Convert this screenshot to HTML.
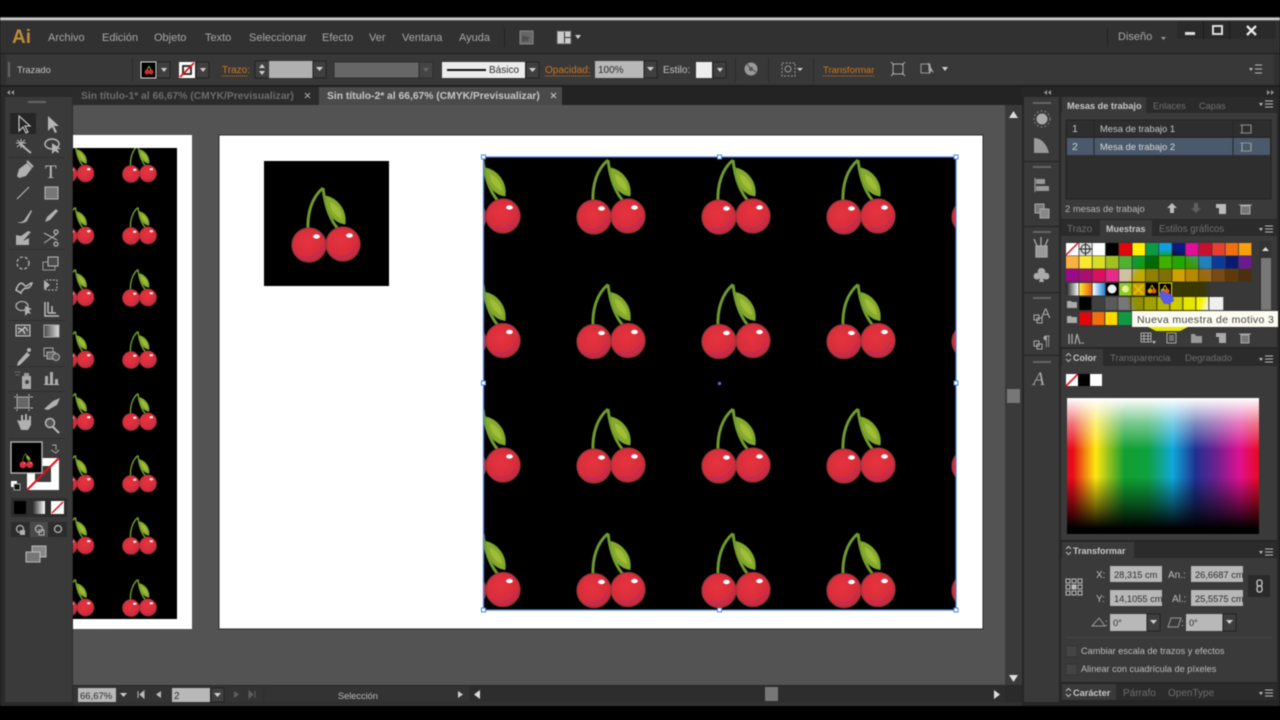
<!DOCTYPE html>
<html lang="es">
<head>
<meta charset="utf-8">
<title>Illustrator</title>
<style>
html,body{margin:0;padding:0;background:#000;width:1280px;height:720px;overflow:hidden}
svg{display:block;filter:blur(.5px)}
text{font-family:"Liberation Sans",sans-serif;font-size:10.5px;fill:#bdbdbd;white-space:pre}
.m{font-size:11px;fill:#a8a8a8}
.b{font-weight:bold}
.d{fill:#6f6f6f}
.o{fill:#d0761e}
.k{fill:#2c2c2c;font-size:9.300px}
.ic{fill:none;stroke:#b5b5b5;stroke-width:1.3}
.fi{fill:#b0b0b0}
.ar{fill:#d0d0d0}
.bx{fill:#3f3f3f;stroke:#222}
</style>
</head>
<body>
<svg width="1280" height="720" viewBox="0 0 1280 720" xmlns="http://www.w3.org/2000/svg">
<defs>
<radialGradient id="ch" cx=".45" cy=".4" r=".65"><stop offset="0" stop-color="#e6343f"/><stop offset=".75" stop-color="#d62c3a"/><stop offset="1" stop-color="#b02832"/></radialGradient>
<radialGradient id="gl" cx=".5" cy=".5" r=".5"><stop offset="0" stop-color="#ffff00"/><stop offset=".8" stop-color="#ffff00"/><stop offset="1" stop-color="#ffffff"/></radialGradient>
<linearGradient id="sp" x1="0" x2="1" y1="0" y2="0"><stop offset="0" stop-color="#d81020"/><stop offset=".03" stop-color="#e80a1a"/><stop offset=".09" stop-color="#f08010"/><stop offset=".15" stop-color="#ffe810"/><stop offset=".22" stop-color="#90c020"/><stop offset=".3" stop-color="#10a030"/><stop offset=".42" stop-color="#10a040"/><stop offset=".55" stop-color="#10a8d8"/><stop offset=".67" stop-color="#203090"/><stop offset=".78" stop-color="#702090"/><stop offset=".9" stop-color="#e01090"/><stop offset="1" stop-color="#e80a20"/></linearGradient>
<linearGradient id="spv" x1="0" x2="0" y1="0" y2="1"><stop offset="0" stop-color="#fff"/><stop offset=".18" stop-color="#fff" stop-opacity=".45"/><stop offset=".38" stop-color="#fff" stop-opacity="0"/><stop offset=".58" stop-color="#000" stop-opacity="0"/><stop offset=".8" stop-color="#000" stop-opacity=".55"/><stop offset=".96" stop-color="#000"/></linearGradient>
<linearGradient id="gr" x1="0" x2="1" y1="0" y2="0"><stop offset="0" stop-color="#444"/><stop offset="1" stop-color="#ddd"/></linearGradient>
<linearGradient id="bw" x1="0" x2="1" y1="0" y2="0"><stop offset="0" stop-color="#222"/><stop offset="1" stop-color="#fff"/></linearGradient>
<linearGradient id="yo" x1="0" x2="1" y1="0" y2="0"><stop offset="0" stop-color="#ffee30"/><stop offset="1" stop-color="#e85a10"/></linearGradient>
<linearGradient id="bl" x1="0" x2="1" y1="0" y2="0"><stop offset="0" stop-color="#fff"/><stop offset="1" stop-color="#2080d8"/></linearGradient>
<clipPath id="c1"><rect x="73" y="148" width="104" height="471"/></clipPath>
<clipPath id="c2"><rect x="484" y="157" width="472" height="453"/></clipPath>
<g id="c">
<path d="M59 27C48 36 43 52 44 70" fill="none" stroke="#6f9a2e" stroke-width="3"/>
<path d="M59 27C61 45 66 60 76 70" fill="none" stroke="#6f9a2e" stroke-width="3"/>
<path d="M62 35C72 37 83 48 81 63C72 62 60 52 62 35Z" fill="#86a92c" stroke="#6f9a2e"/>
<path d="M66 41C73 44 78 50 78 58C72 55 66 50 66 41Z" fill="#a0bd38"/>
<circle cx="79" cy="83" r="17" fill="url(#ch)" stroke="#93363c" stroke-width="1.300"/>
<circle cx="45" cy="84" r="17" fill="url(#ch)" stroke="#93363c" stroke-width="1.300"/>
<path d="M36 95C44 99 54 96 58 86" fill="none" stroke="#b82a6a" stroke-width="1.3"/>
<path d="M70 94C78 98 88 95 92 85" fill="none" stroke="#b82a6a" stroke-width="1.3"/>
<ellipse cx="52.5" cy="75.5" rx="3.400" ry="2.200" fill="#fff"/>
<ellipse cx="85.5" cy="74.5" rx="3.400" ry="2.200" fill="#fff"/>
</g>
</defs>

<rect width="1280" height="720" fill="#000"/>
<rect y="17" width="1280" height="1" fill="#777"/>
<rect y="18" width="1280" height="2" fill="#d4d4d4"/>
<rect y="20" width="1280" height="686" fill="#303030"/>
<rect y="20" width="1280" height="1" fill="#555"/>

<!-- title bar -->
<rect y="21" width="1280" height="32" fill="#313131"/>
<rect y="53" width="1280" height="1" fill="#1e1e1e"/>
<text x="12" y="43" style="font-size:19px;font-weight:bold;fill:#c08a3a">Ai</text>
<text class="m" x="48" y="41">Archivo</text>
<text class="m" x="102" y="41">Edición</text>
<text class="m" x="154" y="41">Objeto</text>
<text class="m" x="205" y="41">Texto</text>
<text class="m" x="249" y="41">Seleccionar</text>
<text class="m" x="322" y="41">Efecto</text>
<text class="m" x="369" y="41">Ver</text>
<text class="m" x="402" y="41">Ventana</text>
<text class="m" x="459" y="41">Ayuda</text>
<rect x="504" y="28" width="1" height="19" fill="#222"/>
<rect x="520" y="31" width="13" height="13" fill="#666" stroke="#888"/>
<text x="522" y="41" style="font-size:7px;fill:#2c2c2c">Br</text>
<rect x="557" y="31" width="14" height="13" fill="#ccc" stroke="#555"/>
<rect x="564" y="32" width="1" height="11" fill="#333"/><rect x="565" y="37" width="6" height="1" fill="#333"/>
<path d="M575 35h6l-3 4z" class="ar"/>
<rect x="1107" y="28" width="1" height="19" fill="#222"/>
<text class="m" x="1118" y="40" style="font-size:11px">Diseño</text>
<path d="M1161 37h5l-2.500 3z" fill="#999"/>
<rect x="1177" y="21" width="99" height="18" rx="2" fill="#2a2a2a"/>
<rect x="1203" y="21" width="1" height="18" fill="#1a1a1a"/><rect x="1229" y="21" width="1" height="18" fill="#1a1a1a"/>
<rect x="1185" y="32" width="10" height="3" fill="#ddd"/>
<rect x="1213" y="26" width="9" height="8" fill="none" stroke="#ddd" stroke-width="2"/>
<path d="M1247 26l9 9M1256 26l-9 9" stroke="#e8e8e8" stroke-width="2.300"/>

<!-- control bar -->
<rect x="6" y="54" width="1268" height="31" fill="#383838"/>
<rect y="85" width="1280" height="2" fill="#1f1f1f"/>
<rect x="8" y="62" width="2" height="15" fill="#666"/>
<text x="17" y="73" style="font-size:9.300px;fill:#c4c4c4">Trazado</text>
<rect x="132" y="58" width="1" height="24" fill="#2b2b2b"/>
<rect x="141" y="62" width="15" height="16" fill="#000" stroke="#ddd"/>
<circle cx="147" cy="72" r="2.500" fill="#d02a38"/><circle cx="151" cy="72" r="2.500" fill="#d02a38"/><path d="M149 66l-2 4M149 66l2 4" stroke="#7a2"/>
<rect x="157" y="62" width="13" height="16" class="bx"/><path d="M161 68h6l-3 4z" class="ar"/>
<rect x="179" y="62" width="16" height="16" fill="#fff"/><rect x="183" y="66" width="8" height="8" fill="none" stroke="#333" stroke-width="2"/><path d="M180 77L194 63" stroke="#e0101a" stroke-width="1.800"/>
<rect x="196" y="62" width="13" height="16" class="bx"/><path d="M200 68h6l-3 4z" class="ar"/>
<text x="222" y="73" class="o" style="font-size:10px">Trazo:</text><path d="M222 76h26" stroke="#d0761e" stroke-dasharray="1 1"/>
<rect x="255" y="61" width="14" height="17" class="bx"/><path d="M259 68l3-4 3 4zM259 71l3 4 3-4z" class="ar"/>
<rect x="269" y="61" width="44" height="17" fill="#b0b0b0"/>
<rect x="313" y="61" width="13" height="17" class="bx"/><path d="M316 67h7l-3.500 4z" class="ar"/>
<rect x="334" y="62" width="85" height="16" fill="#666" stroke="#2d2d2d"/>
<rect x="419" y="62" width="14" height="16" fill="#444" stroke="#2d2d2d"/><path d="M423 68h6l-3 4z" fill="#666"/>
<rect x="442" y="62" width="83" height="16" fill="#ececec"/><rect x="447" y="69" width="39" height="2" fill="#111"/>
<text x="489" y="73" class="k" style="font-size:10px">Básico</text>
<rect x="526" y="62" width="13" height="16" class="bx"/><path d="M529 68h7l-3.500 4z" class="ar"/>
<text x="545" y="73" class="o" style="font-size:10px">Opacidad:</text><path d="M545 76h45" stroke="#d0761e" stroke-dasharray="1 1"/>
<rect x="595" y="61" width="49" height="17" fill="#b8b8b8"/><text x="598" y="73" class="k" style="font-size:10px">100%</text>
<rect x="644" y="61" width="13" height="17" class="bx"/><path d="M647 67h7l-3.500 4z" class="ar"/>
<text x="663" y="73" style="font-size:10px;fill:#c4c4c4">Estilo:</text>
<rect x="696" y="62" width="16" height="16" fill="#eee"/>
<rect x="713" y="62" width="13" height="16" class="bx"/><path d="M717 68h6l-3 4z" class="ar"/>
<rect x="735" y="58" width="1" height="24" fill="#2b2b2b"/>
<circle cx="751" cy="69" r="6.500" fill="#999"/><path d="M751 69l-4-5M751 69l5 3" stroke="#444"/><circle cx="751" cy="69" r="2" fill="#555"/>
<rect x="768" y="58" width="1" height="24" fill="#2b2b2b"/>
<rect x="782" y="63" width="13" height="13" fill="none" stroke="#999" stroke-dasharray="2 1.500"/><circle cx="788" cy="69" r="3" fill="none" stroke="#999"/>
<path d="M797 68h6l-3 3z" fill="#ccc"/>
<rect x="813" y="58" width="1" height="24" fill="#2b2b2b"/>
<text x="823" y="73" class="o" style="font-size:9.500px">Transformar</text><path d="M823 76h51" stroke="#d0761e" stroke-dasharray="1 1"/>
<rect x="893" y="64" width="10" height="10" fill="none" stroke="#aaa"/><path d="M891 62l3 3M905 62l-3 3M891 76l3-3M905 76l-3-3" stroke="#aaa"/>
<rect x="921" y="64" width="9" height="9" fill="none" stroke="#999"/><path d="M928 62l6 11-3-2-2 3z" fill="#aaa"/>
<path d="M942 67h6l-3 4z" class="ar"/>
<path d="M1249 68h4l-2 3z" fill="#bbb"/><path d="M1255 65h7M1255 69h7M1255 73h7" stroke="#bbb"/>

<!-- tabs -->
<rect x="0" y="87" width="1022" height="18" fill="#232323"/>
<rect x="73" y="87" width="246" height="18" fill="#2b2b2b"/>
<text x="81" y="99" class="b" style="font-size:10.300px;fill:#6e6e6e">Sin título-1* al 66,67% (CMYK/Previsualizar)</text>
<path d="M305 93l5 5M310 93l-5 5" stroke="#aaa"/>
<rect x="319" y="87" width="243" height="18" fill="#4a4a4a"/>
<text x="327" y="99" class="b" style="font-size:10.300px;fill:#c8c8c8">Sin título-2* al 66,67% (CMYK/Previsualizar)</text>
<path d="M551 93l5 5M556 93l-5 5" stroke="#ccc"/>

<!-- canvas -->
<rect x="73" y="105" width="932" height="581" fill="#535353"/>
<rect x="73" y="135" width="119" height="494" fill="#fff"/>
<rect x="73" y="148" width="104" height="471" fill="#000"/>
<g clip-path="url(#c1)">
<g transform="translate(46 132) scale(.5)"><use href="#c"/><use href="#c" y="124"/><use href="#c" y="248"/><use href="#c" y="372"/><use href="#c" y="496"/><use href="#c" y="620"/><use href="#c" y="744"/><use href="#c" y="868"/></g>
<g transform="translate(108.500 132) scale(.5)"><use href="#c"/><use href="#c" y="124"/><use href="#c" y="248"/><use href="#c" y="372"/><use href="#c" y="496"/><use href="#c" y="620"/><use href="#c" y="744"/><use href="#c" y="868"/></g>
</g>
<rect x="219" y="135" width="764" height="494" fill="#fff" stroke="#2b2b2b"/>
<rect x="264" y="161" width="125" height="125" fill="#000"/>
<use href="#c" x="264" y="161"/>
<rect x="484" y="157" width="472" height="453" fill="#000"/>
<g clip-path="url(#c2)">
<g transform="translate(424 133)"><use href="#c"/><use href="#c" y="124.500"/><use href="#c" y="249"/><use href="#c" y="373.500"/></g>
<g transform="translate(549 133)"><use href="#c"/><use href="#c" y="124.500"/><use href="#c" y="249"/><use href="#c" y="373.500"/></g>
<g transform="translate(674 133)"><use href="#c"/><use href="#c" y="124.500"/><use href="#c" y="249"/><use href="#c" y="373.500"/></g>
<g transform="translate(799 133)"><use href="#c"/><use href="#c" y="124.500"/><use href="#c" y="249"/><use href="#c" y="373.500"/></g>
<g transform="translate(924 133)"><use href="#c"/><use href="#c" y="124.500"/><use href="#c" y="249"/><use href="#c" y="373.500"/></g>
</g>
<rect x="483.500" y="157" width="472.500" height="453" fill="none" stroke="#4f86d8" stroke-width="1.300"/>
<g fill="#fff" stroke="#4f86d8">
<rect x="481.500" y="155" width="4" height="4"/><rect x="717.500" y="155" width="4" height="4"/><rect x="954" y="155" width="4" height="4"/>
<rect x="481.500" y="381" width="4" height="4"/><rect x="954" y="381" width="4" height="4"/>
<rect x="481.500" y="608" width="4" height="4"/><rect x="717.500" y="608" width="4" height="4"/><rect x="954" y="608" width="4" height="4"/>
</g>
<rect x="718" y="382" width="3" height="3" fill="#4f6fd8"/>

<!-- vertical scrollbar -->
<rect x="1005" y="105" width="17" height="581" fill="#3a3a3a"/>
<path d="M1009 118h9l-4.500-7z" fill="#ddd"/><path d="M1009 675h9l-4.500 7z" fill="#ddd"/>
<rect x="1007" y="389" width="13" height="14" fill="#777"/>

<!-- status bar -->
<rect x="73" y="686" width="949" height="16" fill="#333"/>
<rect x="73" y="685" width="949" height="1" fill="#262626"/>
<rect x="78" y="688" width="38" height="14" fill="#b8b8b8"/><text x="80" y="699" class="k" style="font-size:9.500px">66,67%</text>
<path d="M120 693h7l-3.500 4z" fill="#ccc"/>
<path d="M138 691v7M144 691l-4 3.500 4 3.500z" fill="#bbb" stroke="#bbb"/>
<path d="M161 691l-5 3.500 5 3.500z" fill="#bbb"/>
<rect x="172" y="688" width="38" height="14" fill="#b8b8b8"/><text x="174" y="699" class="k" style="font-size:10px">2</text>
<rect x="211" y="688" width="13" height="14" class="bx"/><path d="M214 693h7l-3.500 4z" class="ar"/>
<path d="M234 691l5 3.500-5 3.500z" fill="#5f5f5f"/><path d="M249 691l4 3.500-4 3.500zM255 691v7" fill="#5f5f5f" stroke="#5f5f5f"/>
<rect x="263" y="687" width="1" height="15" fill="#2a2a2a"/>
<text x="338" y="699" style="font-size:9.200px;fill:#bbb">Selección</text>
<path d="M458 691l5 3.500-5 3.500z" fill="#ccc"/>
<rect x="469" y="686" width="536" height="16" fill="#2d2d2d"/>
<path d="M480 690l-6 4.500 6 4.500z" fill="#ddd"/><path d="M994 690l6 4.500-6 4.500z" fill="#ddd"/>
<rect x="765" y="687" width="13" height="14" fill="#777"/>
<rect x="1005" y="686" width="17" height="16" fill="#2a2a2a"/>

<!-- left toolbar -->
<rect x="0" y="87" width="73" height="619" fill="#2a2a2a"/>
<rect x="5" y="97" width="67" height="605" fill="#3a3a3a"/>
<path d="M10 90v5l-3-2.500zM14 90v5l-3-2.500z" fill="#999"/>
<rect x="28" y="101" width="18" height="2" fill="#666"/>
<rect x="10" y="113" width="26" height="21" fill="#262626"/>
<path d="M19 116V131l4-4 3 6 2-1-3-6h5z" fill="none" stroke="#cfcfcf" stroke-width="1.100"/>
<path d="M48 116V131l4-4 3 6 2-1-3-6h5z" fill="#b5b5b5"/>
<path d="M20 144l11 9" stroke="#b5b5b5" stroke-width="2"/><path d="M21 139v9M16 143h10M17 140l8 7M25 140l-8 7" stroke="#b5b5b5"/>
<ellipse cx="52" cy="144" rx="7" ry="5" fill="none" stroke="#b5b5b5" stroke-width="1.500"/><path d="M52 143v11l3-3 3 2 1-1-2-3h4z" fill="#b5b5b5"/>
<rect x="9" y="157" width="56" height="1" fill="#2e2e2e"/>
<path d="M17 176l2-7 8-6 5 5-6 8-7 2z" class="fi"/><path d="M27 161l6 6" stroke="#b5b5b5" stroke-width="2"/>
<text x="45" y="178" style="font-family:'Liberation Serif',serif;font-size:19px;fill:#c0c0c0">T</text>
<path d="M17 199l12-12" stroke="#c0c0c0"/>
<rect x="45" y="187" width="13" height="12" fill="#777" stroke="#bbb"/>
<path d="M17 222c4 1 7-1 8-3l6-9 1 1-5 10c-2 2-7 3-10 1z" class="fi"/>
<path d="M45 222l2-5 9-8 2 2-8 9z" class="fi"/>
<path d="M16 235v10h13v-7l-6 3 8-9-3-1-7 5z" class="fi"/>
<path d="M44 233l13 7M44 243l13-9" stroke="#b5b5b5"/><circle cx="56" cy="232" r="2" class="ic"/><circle cx="56" cy="244" r="2" class="ic"/>
<rect x="9" y="249" width="56" height="1" fill="#2e2e2e"/>
<circle cx="23" cy="263" r="6" fill="none" stroke="#b5b5b5" stroke-width="1.300" stroke-dasharray="3 2"/>
<rect x="43" y="262" width="12" height="8" fill="none" stroke="#999"/><rect x="48" y="257" width="10" height="9" fill="#4a4a4a" stroke="#bbb"/>
<path d="M16 290c2-6 5-9 8-5 3 3 5-2 8-2-1 4-4 6-7 5-2 2-4 3-4 5z" fill="none" stroke="#bbb" stroke-width="1.500"/>
<rect x="46" y="280" width="11" height="10" fill="none" stroke="#bbb" stroke-dasharray="2 1.500"/><path d="M44 280l6 5-6 5z" class="fi"/>
<ellipse cx="22" cy="306" rx="6" ry="4.500" fill="none" stroke="#aaa" stroke-width="1.300"/><path d="M25 306v10l3-3 3 1-2-4 3-1z" class="fi"/>
<path d="M45 302v14h14" fill="none" stroke="#bbb" stroke-width="1.500"/><path d="M48 302v11M52 306v7M48 313h8" stroke="#bbb" stroke-width="1.500"/>
<rect x="9" y="320" width="56" height="1" fill="#2e2e2e"/>
<rect x="16" y="325" width="14" height="11" fill="#555" stroke="#ccc"/><path d="M18 328l4 2 3-3 3 4M18 333l4-3M25 334l-2-4" stroke="#ddd" fill="none"/>
<rect x="44" y="325" width="15" height="12" fill="url(#gr)" stroke="#aaa"/>
<path d="M18 362l9-10 3 3-10 10-3 1z" class="fi"/><circle cx="29" cy="350" r="2" class="fi"/>
<rect x="44" y="348" width="9" height="8" fill="none" stroke="#aaa"/><rect x="47" y="352" width="8" height="7" fill="#666" stroke="#aaa"/><circle cx="56" cy="357" r="3.500" fill="#555" stroke="#aaa"/>
<rect x="9" y="366" width="56" height="1" fill="#2e2e2e"/>
<rect x="22" y="376" width="9" height="13" fill="#aaa"/><circle cx="27" cy="382" r="2" fill="#444"/><rect x="24" y="373" width="5" height="3" fill="#999"/><path d="M15 372h5M16 375h3" stroke="#999" stroke-dasharray="1 1"/>
<rect x="44" y="384" width="15" height="1" fill="#bbb"/><rect x="45" y="376" width="3" height="8" fill="#aaa"/><rect x="50" y="372" width="3" height="12" fill="#aaa"/><rect x="55" y="379" width="3" height="5" fill="#aaa"/>
<rect x="9" y="391" width="56" height="1" fill="#2e2e2e"/>
<rect x="17" y="397" width="12" height="11" fill="#666" stroke="#aaa"/><path d="M14 397h2M30 397h3M14 408h2M30 408h3M17 394v2M29 394v2M17 409v2M29 409v2" stroke="#bbb"/>
<path d="M44 409l9-8 7-3-3 7-9 5z" class="fi"/>
<path d="M17 420l4 1v-6h2v5h2v-6h2v6h2v-4h2v9l-3 5h-7z" class="fi"/>
<circle cx="50" cy="423" r="4.500" fill="#555" stroke="#bbb" stroke-width="1.500"/><path d="M53 427l6 6" stroke="#bbb" stroke-width="2"/>
<rect x="9" y="438" width="56" height="1" fill="#2e2e2e"/>
<rect x="27" y="458" width="32" height="32" fill="#fff"/><rect x="35" y="466" width="16" height="16" fill="#3a3a3a"/>
<path d="M27 490L59 458" stroke="#e0101a" stroke-width="2"/>
<rect x="11" y="442" width="31" height="31" fill="#000" stroke="#bbb" stroke-width="1.300"/>
<g transform="translate(14 448) scale(.2)"><use href="#c"/></g>
<path d="M52 445h4v5M51 450l5 3 3-3" fill="none" stroke="#aaa"/>
<rect x="11" y="481" width="6" height="6" fill="#fff"/><rect x="14" y="484" width="6" height="6" fill="#111" stroke="#aaa"/>
<rect x="11" y="498" width="56" height="19" fill="#2c2c2c"/>
<rect x="14" y="501" width="12" height="13" fill="#000"/><rect x="32" y="501" width="13" height="13" fill="url(#bw)"/><rect x="51" y="501" width="13" height="13" fill="#fff"/><path d="M52 513l11-11" stroke="#e0101a" stroke-width="1.500"/>
<rect x="11" y="522" width="56" height="15" fill="#2c2c2c"/><rect x="30" y="522" width="18" height="15" fill="#4a4a4a"/>
<circle cx="20" cy="529" r="3.500" class="ic"/><rect x="20" y="530" width="5" height="5" class="fi"/><circle cx="39" cy="529" r="3.500" class="ic"/><rect x="39" y="530" width="5" height="5" fill="none" stroke="#b5b5b5"/><circle cx="58" cy="529" r="3.500" class="ic"/>
<rect x="32" y="546" width="14" height="11" fill="#888" stroke="#bbb"/><rect x="26" y="552" width="14" height="10" fill="#777" stroke="#bbb"/>

<!-- right dock -->
<rect x="1022" y="87" width="258" height="619" fill="#262626"/>
<rect x="1024" y="97" width="35" height="605" fill="#393939"/>
<path d="M1047 90v5l-3-2.500zM1051 90v5l-3-2.500zM1267 90v5l3-2.500zM1271 90v5l3-2.500z" fill="#999"/>
<rect x="1033" y="102" width="18" height="2" fill="#666"/>
<circle cx="1042" cy="119" r="5.500" fill="#aaa"/><circle cx="1042" cy="119" r="8" fill="none" stroke="#888" stroke-dasharray="2 2"/>
<path d="M1034 153v-15c8 0 13 7 15 15z" fill="#999"/>
<rect x="1024" y="161" width="35" height="1" fill="#232323"/>
<rect x="1033" y="166" width="18" height="2" fill="#666"/>
<path d="M1035 178v14" stroke="#aaa"/><rect x="1036" y="179" width="9" height="5" fill="#999"/><rect x="1036" y="186" width="13" height="5" fill="#999"/>
<rect x="1035" y="204" width="9" height="9" fill="#777" stroke="#aaa"/><rect x="1040" y="209" width="9" height="9" fill="#888" stroke="#aaa"/>
<rect x="1024" y="226" width="35" height="1" fill="#232323"/>
<rect x="1033" y="231" width="18" height="2" fill="#666"/>
<path d="M1036 246h11v11h-11zM1037 246l-3-7M1041 246v-9M1045 246l3-7" fill="#999" stroke="#aaa" stroke-width="1.300"/>
<path d="M1041 268c-2 0-4 2-3 5-4-1-5 3-4 5s5 2 6 0l-1 4h5l-1-4c1 2 5 2 6 0s0-6-4-5c1-3-1-5-4-5z" fill="#aaa"/>
<rect x="1024" y="292" width="35" height="1" fill="#232323"/>
<rect x="1033" y="297" width="18" height="2" fill="#666"/>
<text x="1041" y="318" style="font-size:14px;fill:#aaa">A</text><rect x="1034" y="315" width="5" height="5" fill="none" stroke="#aaa"/><rect x="1037" y="318" width="5" height="5" fill="none" stroke="#aaa"/>
<text x="1043" y="345" style="font-size:14px;fill:#aaa">¶</text><rect x="1034" y="341" width="5" height="5" fill="none" stroke="#aaa"/><rect x="1037" y="344" width="5" height="5" fill="none" stroke="#aaa"/>
<rect x="1024" y="355" width="35" height="1" fill="#232323"/>
<rect x="1033" y="361" width="18" height="2" fill="#666"/>
<text x="1033" y="385" style="font-family:'Liberation Serif',serif;font-style:italic;font-size:19px;fill:#aaa">A</text>

<!-- panel 1 -->
<rect x="1061" y="97" width="216" height="16" fill="#2b2b2b"/>
<rect x="1062" y="97" width="84" height="16" fill="#3a3a3a"/>
<rect x="1061" y="113" width="216" height="106" fill="#3a3a3a"/>
<text x="1067" y="109" class="b" style="font-size:9.200px;fill:#c8c8c8">Mesas de trabajo</text>
<text x="1153" y="109" style="font-size:9.200px" class="d">Enlaces</text>
<text x="1199" y="109" style="font-size:9.200px" class="d">Capas</text>
<g id="pm"><path d="M1259 103h4l-2 3z" fill="#bbb"/><path d="M1265 101h8M1265 104h8M1265 107h8" stroke="#bbb"/></g>
<rect x="1066" y="120" width="205" height="79" fill="#2e2e2e" stroke="#232323"/>
<rect x="1067" y="138" width="203" height="17" fill="#4a5a6c"/>
<path d="M1094 120v35M1233 120v35" stroke="#262626"/>
<path d="M1067 137h203" stroke="#262626"/>
<text x="1072" y="132" style="fill:#c8c8c8">1</text><text x="1100" y="132" style="font-size:9.400px;fill:#c8c8c8">Mesa de trabajo 1</text>
<text x="1072" y="150" style="fill:#d0d0d0">2</text><text x="1100" y="150" style="font-size:9.400px;fill:#d8d8d8">Mesa de trabajo 2</text>
<rect x="1242" y="125" width="9" height="8" fill="none" stroke="#999"/><rect x="1242" y="143" width="9" height="8" fill="none" stroke="#aaa"/>
<path d="M1240 125h12M1240 133h12M1240 143h12M1240 151h12" stroke="#888" stroke-dasharray="2 1"/>
<text x="1065" y="212" style="font-size:9.400px;fill:#b8b8b8">2 mesas de trabajo</text>
<path d="M1172 203l-5 5h3v5h4v-5h3z" fill="#bbb"/>
<path d="M1196 213l-5-5h3v-5h4v5h3z" fill="#5f5f5f"/>
<path d="M1216 204h10v10h-7v-6h-3z" fill="#bbb"/>
<path d="M1241 206h9v8h-9zM1239 205h13" fill="#777" stroke="#aaa"/>

<!-- panel 2 -->
<rect x="1061" y="220" width="216" height="16" fill="#2b2b2b"/>
<rect x="1100" y="220" width="52" height="16" fill="#3a3a3a"/>
<rect x="1061" y="236" width="216" height="111" fill="#3a3a3a"/>
<text x="1067" y="232" style="font-size:10px" class="d">Trazo</text>
<text x="1106" y="232" class="b" style="font-size:9px;fill:#c8c8c8">Muestras</text>
<text x="1159" y="232" style="font-size:9.700px" class="d">Estilos gráficos</text>
<use href="#pm" y="125"/>
<rect x="1064" y="241" width="194" height="87" fill="#383838"/>
<rect x="1259" y="241" width="12" height="87" fill="#333"/>
<path d="M1262 251h7l-3.500-4z" fill="#ddd"/><rect x="1261" y="258" width="10" height="52" fill="#777"/>

<g>
<rect x="1066" y="243" width="12.500" height="12.500" fill="#fff"/><path d="M1066 255l12-12" stroke="#e0101a" stroke-width="1.500"/>
<rect x="1079.300" y="243" width="12.500" height="12.500" fill="#ddd"/><circle cx="1085.500" cy="249" r="4.500" fill="none" stroke="#222"/><path d="M1079 249h13M1085.500 243v13" stroke="#222"/>
<rect x="1092.600" y="243" width="12.500" height="12.500" fill="#fff"/>
<rect x="1105.900" y="243" width="12.500" height="12.500" fill="#000"/>
<rect x="1119.200" y="243" width="12.500" height="12.500" fill="#e0060c"/>
<rect x="1132.500" y="243" width="12.500" height="12.500" fill="#ffee00"/>
<rect x="1145.800" y="243" width="12.500" height="12.500" fill="#0a9a48"/>
<rect x="1159.100" y="243" width="12.500" height="12.500" fill="#10a0e0"/>
<rect x="1172.400" y="243" width="12.500" height="12.500" fill="#0a1a80"/>
<rect x="1185.700" y="243" width="12.500" height="12.500" fill="#e00e98"/>
<rect x="1199" y="243" width="12.500" height="12.500" fill="#c8102e"/>
<rect x="1212.300" y="243" width="12.500" height="12.500" fill="#e84030"/>
<rect x="1225.600" y="243" width="12.500" height="12.500" fill="#f07010"/>
<rect x="1238.900" y="243" width="12.500" height="12.500" fill="#f8a010"/>
<rect x="1066" y="256" width="12.500" height="12.500" fill="#fbb040"/>
<rect x="1079.300" y="256" width="12.500" height="12.500" fill="#f7e92e"/>
<rect x="1092.600" y="256" width="12.500" height="12.500" fill="#d7df23"/>
<rect x="1105.900" y="256" width="12.500" height="12.500" fill="#a0c020"/>
<rect x="1119.200" y="256" width="12.500" height="12.500" fill="#50b030"/>
<rect x="1132.500" y="256" width="12.500" height="12.500" fill="#109a30"/>
<rect x="1145.800" y="256" width="12.500" height="12.500" fill="#006a20"/>
<rect x="1159.100" y="256" width="12.500" height="12.500" fill="#40b010"/>
<rect x="1172.400" y="256" width="12.500" height="12.500" fill="#20a820"/>
<rect x="1185.700" y="256" width="12.500" height="12.500" fill="#3a9a50"/>
<rect x="1199" y="256" width="12.500" height="12.500" fill="#2080c0"/>
<rect x="1212.300" y="256" width="12.500" height="12.500" fill="#0a3a9a"/>
<rect x="1225.600" y="256" width="12.500" height="12.500" fill="#0a1a70"/>
<rect x="1238.900" y="256" width="12.500" height="12.500" fill="#6a1a90"/>
<rect x="1066" y="269" width="12.500" height="12.500" fill="#9a0a8a"/>
<rect x="1079.300" y="269" width="12.500" height="12.500" fill="#a81070"/>
<rect x="1092.600" y="269" width="12.500" height="12.500" fill="#d8105e"/>
<rect x="1105.900" y="269" width="12.500" height="12.500" fill="#e82a8a"/>
<rect x="1119.200" y="269" width="12.500" height="12.500" fill="#d0c0a8"/>
<rect x="1132.500" y="269" width="12.500" height="12.500" fill="#c0a880"/>
<rect x="1145.800" y="269" width="12.500" height="12.500" fill="#908060"/>
<rect x="1159.100" y="269" width="12.500" height="12.500" fill="#807050"/>
<rect x="1172.400" y="269" width="12.500" height="12.500" fill="#d0a020"/>
<rect x="1185.700" y="269" width="12.500" height="12.500" fill="#b8880e"/>
<rect x="1199" y="269" width="12.500" height="12.500" fill="#9a6a18"/>
<rect x="1212.300" y="269" width="12.500" height="12.500" fill="#7a4a14"/>
<rect x="1225.600" y="269" width="12.500" height="12.500" fill="#5f3a08"/>
<rect x="1238.900" y="269" width="12.500" height="12.500" fill="#4a300c"/>
<rect x="1066" y="283" width="12.500" height="12.500" fill="url(#bw)"/>
<rect x="1079.300" y="283" width="12.500" height="12.500" fill="url(#yo)"/>
<rect x="1092.600" y="283" width="12.500" height="12.500" fill="url(#bl)"/>
<rect x="1105.900" y="283" width="12.500" height="12.500" fill="#000"/><circle cx="1112" cy="289" r="4.500" fill="#eee"/>
<rect x="1119.200" y="283" width="12.500" height="12.500" fill="#90c830"/><circle cx="1125.500" cy="289" r="3.500" fill="#e8f0a0"/>
<rect x="1132.500" y="283" width="12.500" height="12.500" fill="#c8a010"/><path d="M1134 285l9 9M1143 285l-9 9" stroke="#e8c830" stroke-width="1.500"/>
<rect x="1145.800" y="283" width="12.500" height="12.500" fill="#000"/><circle cx="1150" cy="291" r="2.500" fill="#e0a030"/><circle cx="1154" cy="291" r="2.500" fill="#e06030"/><path d="M1152 285l-2 4M1152 285l2 4" stroke="#c0b030"/>
<rect x="1159.100" y="283" width="12.500" height="12.500" fill="#000" stroke="#e8e870"/><circle cx="1163" cy="291" r="2.500" fill="#e0a030"/><circle cx="1167" cy="291" r="2.500" fill="#e06030"/><path d="M1165 285l-2 4M1165 285l2 4" stroke="#c0b030"/>
<rect x="1066" y="297" width="12.500" height="13" fill="#3a3a3a"/><path d="M1067 301h4l1 1h5v6h-10z" fill="#aaa"/>
<rect x="1079.300" y="297" width="12" height="13" fill="#000"/>
<rect x="1092.300" y="297" width="12" height="13" fill="#404040"/>
<rect x="1105.300" y="297" width="12" height="13" fill="#5a5a5a"/>
<rect x="1118.300" y="297" width="12" height="13" fill="#777"/>
<rect x="1131.300" y="297" width="12" height="13" fill="#8f8f8f"/>
<rect x="1144.300" y="297" width="12" height="13" fill="#a0a0a0"/>
<rect x="1157.300" y="297" width="12" height="13" fill="#b5b5b5"/>
<rect x="1170.300" y="297" width="12" height="13" fill="#cccccc"/>
<rect x="1183.300" y="297" width="12" height="13" fill="#e5e5e5"/>
<rect x="1196.300" y="297" width="12" height="13" fill="#f4f4f4"/>
<rect x="1209.300" y="297" width="14" height="13" fill="#f0f0f0"/>
<rect x="1066" y="312" width="12.500" height="13" fill="#3a3a3a"/><path d="M1067 316h4l1 1h5v6h-10z" fill="#aaa"/>
<rect x="1079.300" y="312" width="12" height="13" fill="#e0060c"/>
<rect x="1092.300" y="312" width="12" height="13" fill="#f07010"/>
<rect x="1105.300" y="312" width="12" height="13" fill="#ffd800"/>
<rect x="1118.300" y="312" width="13" height="13" fill="#109a40"/>
</g>
<!-- buttons under swatches -->
<path d="M1069 334v10M1072 334v10M1075 344l2-10 3 10" fill="none" stroke="#aaa" stroke-width="1.300"/><path d="M1081 343h3" stroke="#aaa"/>
<rect x="1141" y="333" width="10" height="9" fill="none" stroke="#aaa"/><path d="M1141 336h10M1141 339h10M1144 333v9M1148 333v9" stroke="#aaa"/><path d="M1152 341h4l-2 3z" fill="#bbb"/>
<rect x="1167" y="333" width="9" height="10" fill="none" stroke="#aaa"/><path d="M1169 336h5M1169 338h5M1169 340h5" stroke="#aaa"/>
<path d="M1191 334h4l1 2h6v7h-11z" fill="#999"/>
<path d="M1216 333h10v10h-7v-6h-3z" fill="#aaa"/>
<path d="M1241 335h8v8h-8zM1239 334h12" fill="#777" stroke="#aaa"/>

<!-- glow -->
<circle cx="1168" cy="292" r="43" fill="url(#gl)" style="mix-blend-mode:multiply"/>
<path d="M1148 327h40l-8 4h-24z" fill="#e8e800"/>
<path d="M1161 291l3-1 1 3h4l4 3 1 5-5 3h-5l-3-5-2-4z" fill="#5a5ae8"/>
<rect x="1132" y="311" width="146" height="16" fill="#fbfbf0"/>
<text x="1137" y="323" style="font-size:10.500px;fill:#444;letter-spacing:.35px">Nueva muestra de motivo 3</text>

<!-- color panel -->
<rect x="1061" y="349" width="216" height="17" fill="#2b2b2b"/>
<rect x="1062" y="349" width="41" height="17" fill="#3a3a3a"/>
<rect x="1061" y="366" width="216" height="174" fill="#3a3a3a"/>
<path d="M1066 356l2.500-2.500 2.500 2.500M1066 359l2.500 2.500 2.500-2.500" fill="none" stroke="#bbb"/>
<text x="1073" y="361" class="b" style="font-size:9px;fill:#c8c8c8">Color</text>
<text x="1110" y="361" style="font-size:9.500px" class="d">Transparencia</text>
<text x="1185" y="361" style="font-size:9.500px" class="d">Degradado</text>
<use href="#pm" y="255"/>
<rect x="1066" y="374" width="12" height="12" fill="#fff"/><path d="M1066 386l12-12" stroke="#e0101a" stroke-width="1.600"/>
<rect x="1078" y="374" width="12" height="12" fill="#000"/>
<rect x="1090" y="374" width="12" height="12" fill="#fff"/>
<rect x="1067" y="398" width="192" height="136" fill="url(#sp)"/>
<rect x="1067" y="398" width="192" height="136" fill="url(#spv)"/>

<!-- transform panel -->
<rect x="1061" y="542" width="216" height="16" fill="#2b2b2b"/>
<rect x="1062" y="542" width="72" height="16" fill="#3a3a3a"/>
<rect x="1061" y="558" width="216" height="124" fill="#3a3a3a"/>
<path d="M1066 549l2.500-2.500 2.500 2.500M1066 552l2.500 2.500 2.500-2.500" fill="none" stroke="#bbb"/>
<text x="1073" y="554" class="b" style="font-size:9px;fill:#c8c8c8">Transformar</text>
<use href="#pm" y="448"/>
<g fill="none" stroke="#bbb">
<rect x="1066" y="579" width="4" height="4"/><rect x="1072" y="579" width="4" height="4"/><rect x="1078" y="579" width="4" height="4"/>
<rect x="1066" y="585" width="4" height="4"/><rect x="1072" y="585" width="4" height="4" fill="#bbb"/><rect x="1078" y="585" width="4" height="4"/>
<rect x="1066" y="591" width="4" height="4"/><rect x="1072" y="591" width="4" height="4"/><rect x="1078" y="591" width="4" height="4"/>
</g>
<text x="1096" y="578" style="font-size:10px">X:</text>
<text x="1096" y="602" style="font-size:10px">Y:</text>
<text x="1168" y="578" style="font-size:10px">An.:</text>
<text x="1172" y="602" style="font-size:10px">Al.:</text>
<rect x="1110" y="566" width="52" height="16" fill="#b8b8b8"/><text x="1114" y="578" class="k">28,315 cm</text>
<rect x="1110" y="590" width="52" height="16" fill="#b8b8b8"/><text x="1114" y="602" class="k">14,1055 cm</text>
<rect x="1191" y="566" width="52" height="16" fill="#b8b8b8"/><text x="1195" y="578" class="k">26,6687 cm</text>
<rect x="1191" y="590" width="52" height="16" fill="#b8b8b8"/><text x="1195" y="602" class="k">25,5575 cm</text>
<rect x="1248" y="575" width="22" height="22" fill="#2a2a2a"/>
<rect x="1257" y="580" width="5" height="6" rx="2" fill="none" stroke="#ccc" stroke-width="1.300"/><rect x="1257" y="586" width="5" height="6" rx="2" fill="none" stroke="#ccc" stroke-width="1.300"/>
<path d="M1092 626h13l-6-8z" fill="none" stroke="#999"/><text x="1105" y="626" style="font-size:10px">:</text>
<rect x="1110" y="614" width="37" height="17" fill="#b8b8b8"/><text x="1113" y="626" class="k">0°</text>
<rect x="1147" y="614" width="13" height="17" class="bx"/><path d="M1150 620h7l-3.500 4z" class="ar"/>
<path d="M1168 627l3-9h10l-3 9z" fill="none" stroke="#999"/><text x="1181" y="626" style="font-size:10px">:</text>
<rect x="1186" y="614" width="37" height="17" fill="#b8b8b8"/><text x="1189" y="626" class="k">0°</text>
<rect x="1223" y="614" width="13" height="17" class="bx"/><path d="M1226 620h7l-3.500 4z" class="ar"/>
<rect x="1066" y="637" width="205" height="1" fill="#454545"/>
<rect x="1066" y="646" width="11" height="11" fill="#444" stroke="#333"/>
<text x="1081" y="654" style="font-size:9.200px">Cambiar escala de trazos y efectos</text>
<rect x="1066" y="664" width="11" height="11" fill="#444" stroke="#333"/>
<text x="1081" y="672" style="font-size:9.200px">Alinear con cuadrícula de píxeles</text>

<!-- character -->
<rect x="1061" y="684" width="216" height="16" fill="#2b2b2b"/>
<rect x="1062" y="684" width="54" height="16" fill="#3a3a3a"/>
<path d="M1066 691l2.500-2.500 2.500 2.500M1066 694l2.500 2.500 2.500-2.500" fill="none" stroke="#bbb"/>
<text x="1073" y="696" class="b" style="font-size:9.200px;fill:#c8c8c8">Carácter</text>
<text x="1123" y="696" style="font-size:10px" class="d">Párrafo</text>
<text x="1168" y="696" style="font-size:10px" class="d">OpenType</text>
<use href="#pm" y="589"/>

<rect y="706" width="1280" height="14" fill="#000"/>
</svg>
</body>
</html>
